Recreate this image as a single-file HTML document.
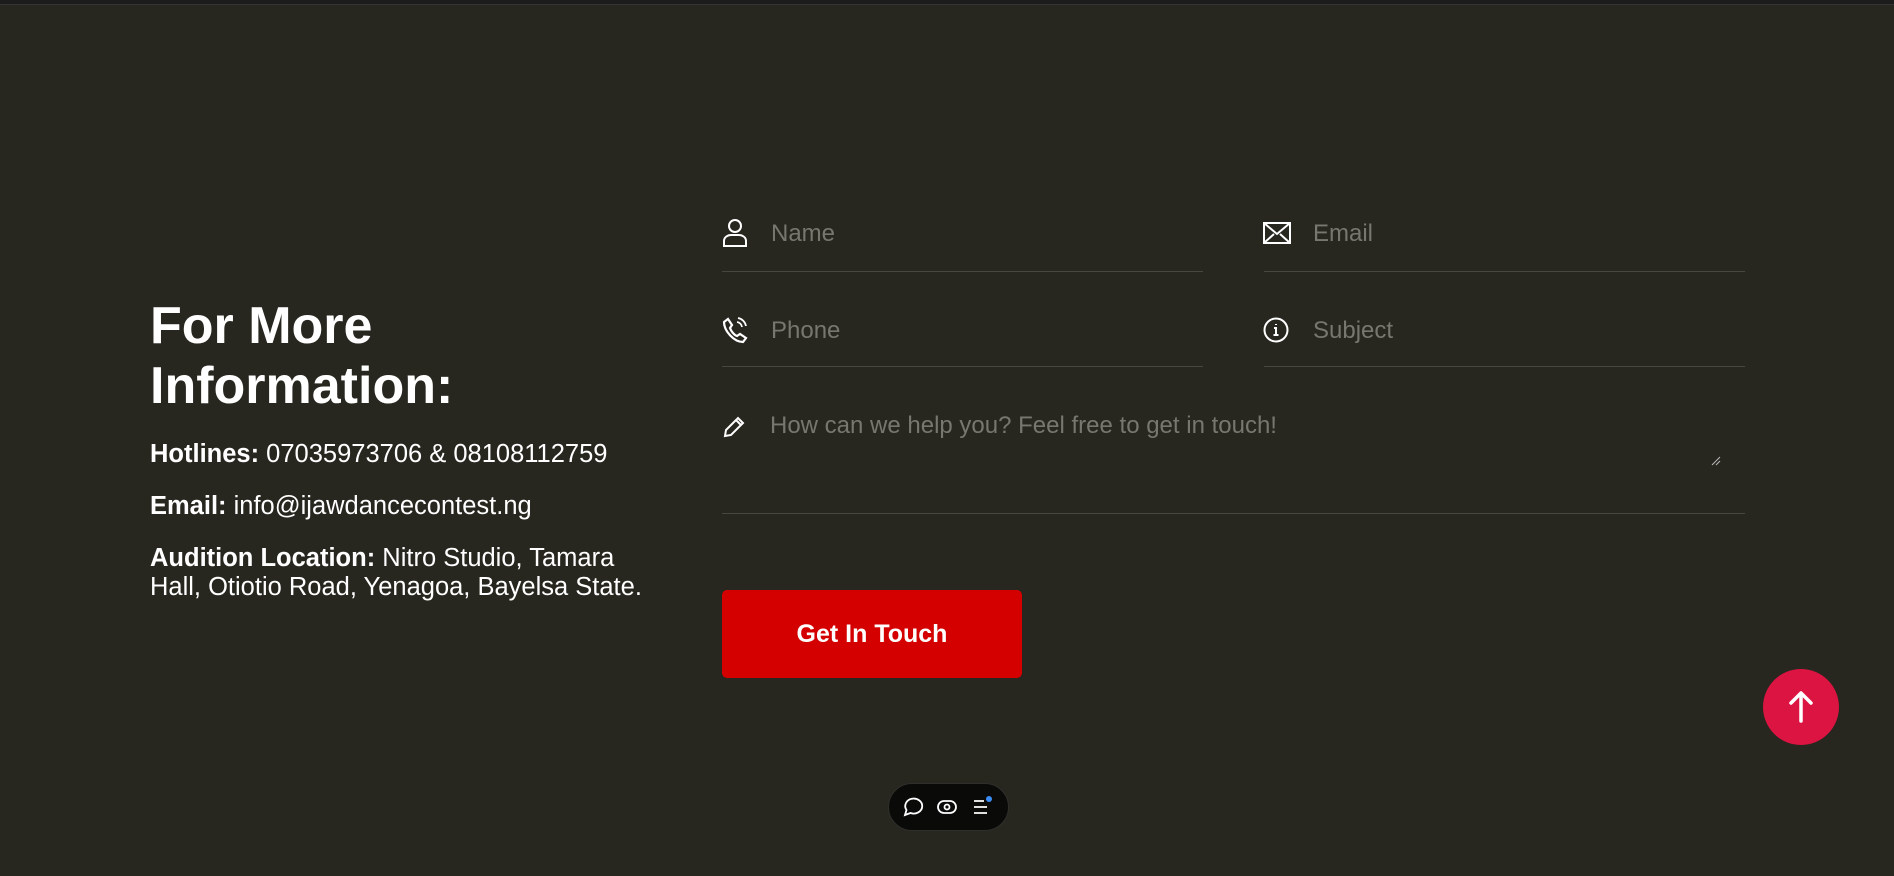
<!DOCTYPE html>
<html><head><meta charset="utf-8"><style>
*{margin:0;padding:0;box-sizing:border-box}
body{width:1894px;height:876px;background:#27261f;font-family:"Liberation Sans",sans-serif;color:#fff;position:relative;overflow:hidden}
.top{position:absolute;left:0;top:0;width:100%;height:5px;background:#1c1c1c;border-bottom:1px solid #333}
h2{position:absolute;left:150px;top:296px;font-size:52px;line-height:60px;font-weight:bold}
.info{position:absolute;left:150px;font-size:25.5px;line-height:29px;width:510px}
.f{position:absolute;border-bottom:1px solid #47463f;height:1px}
.ph{position:absolute;color:#78776f;font-size:24px;line-height:28px}
svg.i{position:absolute;fill:none;stroke:#fff;stroke-width:2}
.btn{position:absolute;left:722px;top:590px;width:300px;height:88px;background:#d40000;border-radius:5px;font-weight:bold;font-size:25px;line-height:88px;text-align:center}
.up{position:absolute;left:1763px;top:669px;width:76px;height:76px;border-radius:50%;background:#dc1442}
.pill{position:absolute;left:888px;top:783px;width:121px;height:48px;border-radius:24px;background:#0a0a09;border:1px solid #2f2f2c}
</style></head><body>
<div class="top"></div>
<h2>For More<br>Information:</h2>
<div class="info" style="top:440px"><b>Hotlines:</b> 07035973706 &amp; 08108112759</div>
<div class="info" style="top:492px"><b>Email:</b> info@ijawdancecontest.ng</div>
<div class="info" style="top:544px"><b>Audition Location:</b> Nitro Studio, Tamara Hall, Otiotio Road, Yenagoa, Bayelsa State.</div>

<svg class="i" style="left:722px;top:218px" width="26" height="30" viewBox="0 0 26 30"><circle cx="13" cy="8" r="6"/><path d="M2 28v-5c0-4 4-6 7-6h8c3 0 7 2 7 6v5z"/></svg>
<div class="ph" style="left:771px;top:220px">Name</div>
<div class="f" style="left:722px;top:271px;width:481px"></div>

<svg class="i" style="left:1263px;top:222px" width="28" height="22" viewBox="0 0 28 22"><rect x="1" y="1" width="26" height="20"/><path d="M1 1l13 11 13-11M1 21l10-9M27 21l-10-9"/></svg>
<div class="ph" style="left:1313px;top:220px">Email</div>
<div class="f" style="left:1264px;top:271px;width:481px"></div>

<svg class="i" style="left:722px;top:316px" width="26" height="28" viewBox="0 0 26 28"><path d="M6 3l4 6-2 3c1 3 4 7 7 8l3-2 6 4-3 4C12 26 2 15 2 6z" stroke-width="2.2"/><path d="M15 6a6 6 0 0 1 5 5M16 2a10 10 0 0 1 8 8" stroke-width="1.8"/></svg>
<div class="ph" style="left:771px;top:317px">Phone</div>
<div class="f" style="left:722px;top:366px;width:481px"></div>

<svg class="i" style="left:1263px;top:317px" width="26" height="26" viewBox="0 0 26 26"><circle cx="13" cy="13" r="11.5"/><path d="M13 7v1M11 11h2v7M10.5 18h5" /></svg>
<div class="ph" style="left:1313px;top:317px">Subject</div>
<div class="f" style="left:1264px;top:366px;width:481px"></div>

<svg class="i" style="left:722px;top:415px" width="24" height="24" viewBox="0 0 24 24"><path d="M3 21l1-6L16 3l5 5L9 20z M14 5l5 5" stroke-width="2"/></svg>
<div class="ph" style="left:770px;top:412px">How can we help you? Feel free to get in touch!</div>
<svg style="position:absolute;left:1710px;top:455px" width="12" height="12"><path d="M2 10L10 2M6 10L10 6" stroke="#bbb" stroke-width="1"/></svg>
<div class="f" style="left:722px;top:513px;width:1023px"></div>

<div class="btn">Get In Touch</div>
<div class="up"><svg width="76" height="76" viewBox="0 0 76 76"><path d="M38 52V25M28 34l10-10 10 10" stroke="#fff" stroke-width="3.5" fill="none" stroke-linecap="round" stroke-linejoin="round"/></svg></div>
<div class="pill"><svg width="119" height="46" viewBox="0 0 119 46" fill="none" stroke="#fff" stroke-width="1.8">
<path d="M16 31l1.5-5a8.5 7.5 0 1 1 4 3z"/>
<rect x="49" y="17" width="18" height="12" rx="6"/><circle cx="58" cy="23" r="2.5"/>
<path d="M85 17h10M85 23h13M85 29h13"/><circle cx="100" cy="15" r="3" fill="#3b8cf5" stroke="none"/>
</svg></div>
</body></html>
